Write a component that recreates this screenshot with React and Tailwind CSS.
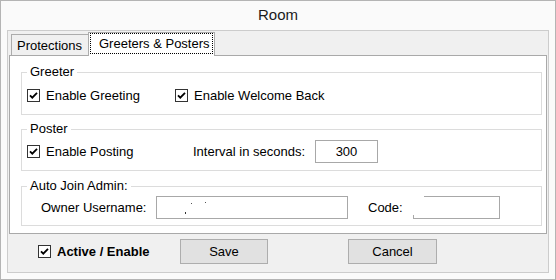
const Check = () => (
  <svg width="13" height="13" viewBox="0 0 13 13" className="shrink-0 block">
    <rect x="0.5" y="0.5" width="12" height="12" fill="#fff" stroke="#333333" />
    <path d="M3 6.3 L5.3 8.7 L10 3.8" fill="none" stroke="#000" strokeWidth="1.8" />
  </svg>
);

export default function App() {
  return (
    <div className="w-[556px] h-[280px] bg-[#fafafa] border border-[#b4b4b4] text-black font-['Liberation_Sans',Arial,sans-serif]">
      <div className="h-[29px] flex items-center justify-center text-[15px] text-[#1a1a1a]">Room</div>
      <div className="ml-[6px] w-[542px] h-[243px] bg-[#f0f0f0] border border-[#cccccc] text-[13px] leading-[15px]">
        {/* tabs */}
        <div className="flex items-end h-[24px] pl-[3px]">
          <div className="w-[77px] h-[21px] border-l border-t border-[#acacac] flex items-center pl-[5px]">Protections</div>
          <div className="relative z-10 -mb-px w-[127px] h-[24px] bg-white border-l border-t border-r border-[#acacac] pl-[1px]">
            <div className="w-[123px] h-[21px] border border-dotted border-black flex items-center pl-[8px] whitespace-nowrap">
              Greeters &amp; Posters
            </div>
          </div>
        </div>
        {/* page */}
        <div className="ml-[1px] w-[538px] h-[179px] bg-white border border-[#a9a9a9] pt-[8px]">
          <fieldset className="ml-[11px] w-[521px] border border-[#dcdcdc]">
            <legend className="ml-[5px] px-[3px] leading-[16px]">Greeter</legend>
            <div className="h-[34px] pt-[8px] pl-[5px] flex items-start">
              <div className="w-[148px] h-[15px] flex items-center gap-[6px]">
                <Check />
                <span>Enable Greeting</span>
              </div>
              <div className="h-[15px] flex items-center gap-[6px]">
                <Check />
                <span>Enable Welcome Back</span>
              </div>
            </div>
          </fieldset>
          <fieldset className="mt-[6px] ml-[11px] w-[521px] border border-[#dcdcdc]">
            <legend className="ml-[5px] px-[3px] leading-[16px]">Poster</legend>
            <div className="h-[33px] pt-[3px] pl-[5px] flex items-start">
              <div className="w-[166px] h-[23px] flex items-center gap-[6px]">
                <Check />
                <span>Enable Posting</span>
              </div>
              <div className="w-[122px] h-[23px] flex items-center">Interval in seconds:</div>
              <div className="w-[63px] h-[23px] border border-[#a8a8a8] flex items-center justify-center">300</div>
            </div>
          </fieldset>
          <fieldset className="mt-[7px] ml-[11px] w-[521px] border border-[#dcdcdc]">
            <legend className="ml-[5px] px-[3px] leading-[16px]">Auto Join Admin:</legend>
            <div className="h-[31px] pt-[2px] pl-[19px] flex items-start">
              <div className="w-[115px] h-[23px] flex items-center">Owner Username:</div>
              <div className="relative w-[192px] h-[23px] border border-[#a8a8a8]">
                <svg width="60" height="20" className="absolute left-[28px] top-[5px]">
                  <rect x="0" y="10" width="1" height="2" fill="#333" />
                  <rect x="6" y="1" width="1" height="1" fill="#555" />
                  <rect x="20" y="0" width="1" height="1" fill="#555" />
                </svg>
              </div>
              <div className="ml-[20px] w-[45px] h-[23px] flex items-center">Code:</div>
              <div className="relative w-[87px] h-[23px] border border-[#a8a8a8]">
                <div className="absolute -left-px -top-px w-[11px] h-[19px] bg-white"></div>
              </div>
            </div>
          </fieldset>
        </div>
        {/* bottom */}
        <div className="mt-[5px] h-[25px] pl-[30px] flex items-center">
          <div className="w-[142px] h-[25px] flex items-center gap-[6px] font-bold">
            <Check />
            <span>Active / Enable</span>
          </div>
          <div className="w-[88px] h-[25px] border border-[#adadad] bg-[#e1e1e1] flex items-center justify-center">Save</div>
          <div className="ml-[80px] w-[89px] h-[25px] border border-[#adadad] bg-[#e1e1e1] flex items-center justify-center">Cancel</div>
        </div>
      </div>
    </div>
  );
}
